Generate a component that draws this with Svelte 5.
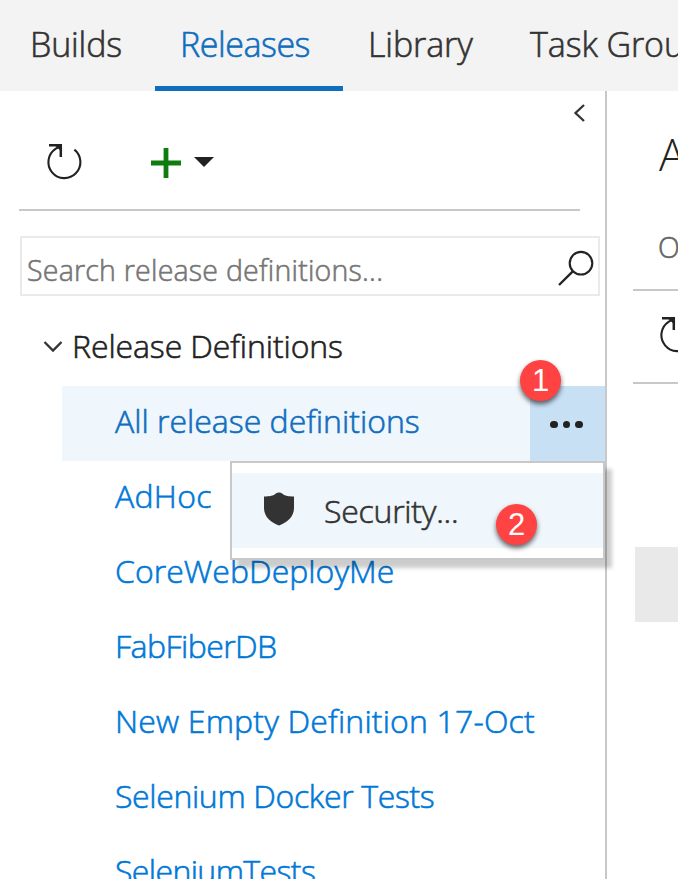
<script>
  const tabs = [
    { label: 'Builds', width: 155, spacing: -0.15 },
    { label: 'Releases', width: 188, spacing: -0.45, active: true },
    { label: 'Library', width: 162, spacing: -0.1 },
    { label: 'Task Groups', width: 220, spacing: -0.1 }
  ];
  const definitions = [
    { name: 'All release definitions', spacing: 0, selected: true },
    { name: 'AdHoc', spacing: 0.3 },
    { name: 'CoreWebDeployMe', spacing: 0.03 },
    { name: 'FabFiberDB', spacing: -0.55 },
    { name: 'New Empty Definition 17-Oct', spacing: 0.18 },
    { name: 'Selenium Docker Tests', spacing: -0.35 },
    { name: 'SeleniumTests', spacing: -0.6 }
  ];
</script>

{#snippet refresh()}
  <svg class="refresh" width="38" height="38" viewBox="0 0 38 38">
    <path d="M28.4 6.6A16 16 0 1 1 9.5 5.8L14.4 3" fill="none" stroke="#222" stroke-width="2.1" />
    <path d="M3 2.3H14.8V14" fill="none" stroke="#222" stroke-width="2.5" />
    <path d="M9 2.5H14.8V8Z" fill="#222" />
  </svg>
{/snippet}

<div class="app">
  <nav>
    {#each tabs as tab}
      <a class="tab" class:active={tab.active} style="width:{tab.width}px;letter-spacing:{tab.spacing}px">{tab.label}</a>
    {/each}
  </nav>
  <div class="body">
    <aside>
      <div class="collapse">
        <svg width="14" height="20" viewBox="0 0 14 20"><path d="M12 2L3.500 10L12 18" fill="none" stroke="#333" stroke-width="2.300" /></svg>
      </div>
      <div class="toolbar">
        {@render refresh()}
        <svg class="plus" width="32" height="32" viewBox="0 0 32 32"><path d="M1 16H31M16 1V31" stroke="#107c10" stroke-width="4.8" /></svg>
        <svg class="caret" width="20" height="11" viewBox="0 0 20 11"><path d="M0 0H20L10 10Z" fill="#222" /></svg>
      </div>
      <div class="search">
        <span>Search release definitions...</span>
        <svg width="38" height="38" viewBox="0 0 38 38"><circle cx="24" cy="13.2" r="11.3" fill="none" stroke="#222" stroke-width="2.1" /><path d="M16 21.2L2 35" stroke="#222" stroke-width="2.4" /></svg>
      </div>
      <div class="group">
        <svg width="20" height="14" viewBox="0 0 20 14"><path d="M1.5 2L10 10.5L18.5 2" fill="none" stroke="#333" stroke-width="2.3" /></svg>
        <span>Release Definitions</span>
      </div>
      <ul>
        {#each definitions as d}
          <li class:selected={d.selected}>
            <a style="letter-spacing:{d.spacing}px">{d.name}</a>
            {#if d.selected}
              <button aria-label="More actions"><i></i><i></i><i></i></button>
              <b class="badge one">1</b>
              <div class="menu">
                <div class="item">
                  <svg width="32" height="34" viewBox="0 0 32 34"><path d="M1 4.5C7 4.500 10.500 3.500 12.500 1.700Q16 -.5 19.500 1.700C21.500 3.500 25 4.500 31 4.500V16C31 25 24 30.500 16 33.500C8 30.500 1 25 1 16Z" fill="#333" /></svg>
                  <span>Security...</span>
                </div>
                <b class="badge two">2</b>
              </div>
            {/if}
          </li>
        {/each}
      </ul>
    </aside>
    <main>
      <h1>All release definitions</h1>
      <div class="views">Overview</div>
      <div class="tools">{@render refresh()}</div>
      <div class="strip"></div>
    </main>
  </div>
</div>

<style>
  :global(body) { margin: 0; overflow: hidden; }
  .app { width: 678px; height: 879px; overflow: hidden; display: flex; flex-direction: column; background: #fff; color: #222; font-family: "Open Sans", "Noto Sans", sans-serif; font-weight: 300; font-size: 32px; white-space: nowrap; -webkit-text-stroke: 0.6px currentColor; }
  svg { display: block; flex: none; }
  nav { flex: none; height: 91px; display: flex; background: #f3f3f3; font-size: 34px; }
  .tab { box-sizing: border-box; flex: none; height: 91px; padding-left: 25px; line-height: 88px; color: #333; }
  .tab:first-child { padding-left: 30px; }
  .tab.active { color: #106ebe; border-bottom: 5px solid #106ebe; }
  .body { flex: 1; min-height: 0; display: flex; }
  aside { box-sizing: border-box; width: 607px; flex: none; border-right: 2px solid #c8c8c8; display: flex; flex-direction: column; }
  aside > * { flex: none; }
  .collapse { height: 21px; padding: 12px 0 0 572px; }
  .toolbar { height: 85px; margin: 0 25px 0 19px; border-bottom: 2px solid #c8c8c8; display: flex; }
  .toolbar .refresh { margin: 19px 0 0 27px; }
  .plus { margin: 23px 0 0 66px; }
  .caret { margin: 33px 0 0 12px; }
  .search { box-sizing: border-box; height: 60px; width: 580px; margin: 25px 0 0 20px; border: 2px solid #eaeaea; display: flex; justify-content: space-between; padding: 0 3px 0 5px; font-size: 28.5px; line-height: 65px; color: #767676; letter-spacing: 0.23px; }
  .search svg { margin-top: 12px; }
  .group { height: 90px; display: flex; padding-left: 43px; line-height: 100px; letter-spacing: -0.1px; }
  .group svg { margin: 44px 9px 0 0; }
  ul { list-style: none; margin: 0; padding: 0; }
  li { position: relative; height: 75px; line-height: 69px; margin-left: 62px; padding-left: 53px; display: flex; justify-content: space-between; color: #0078d7; }
  li.selected { background: #eff6fc; color: #106ebe; }
  button { width: 75px; height: 75px; border: 0; padding: 2px 2px 0 0; background: #c7e0f4; display: flex; align-items: center; justify-content: center; gap: 5px; }
  i { width: 7.5px; height: 7.5px; border-radius: 50%; background: #222; }
  .menu { box-sizing: border-box; position: absolute; z-index: 2; left: 168px; top: 75px; width: 375px; height: 99px; padding: 10px 0; border: 2px solid #c8c8c8; background: #fff; box-shadow: 7px 8px 4px rgba(0, 0, 0, .2); color: #333; }
  .item { height: 75px; background: #eff6fc; display: flex; line-height: 76px; letter-spacing: -0.25px; }
  .item svg { margin: 19px 29px 0 31px; }
  .badge { position: absolute; z-index: 3; width: 41px; height: 41px; border-radius: 50%; background: #ff4343; color: #fff; font: 400 31px/41px "Liberation Sans", sans-serif; text-align: center; box-shadow: 0 3px 5px rgba(0, 0, 0, .6); -webkit-text-stroke: 0; }
  .one { left: 458px; top: -26px; }
  .two { left: 264px; top: 41px; }
  main { flex: 1; min-width: 0; overflow: hidden; padding-left: 26px; }
  h1 { margin: 0 0 0 26px; height: 126px; line-height: 126px; font-size: 44px; font-weight: 300; -webkit-text-stroke: 0; }
  .views { height: 72px; line-height: 61px; padding-left: 25px; color: #666; border-bottom: 2px solid #c8c8c8; font-size: 28.5px; }
  .tools { height: 91px; border-bottom: 2px solid #c8c8c8; }
  .tools .refresh { padding: 25px 0 0 26px; }
  .strip { height: 75px; margin: 163px 0 0 2px; background: #e9e9e9; }
</style>
